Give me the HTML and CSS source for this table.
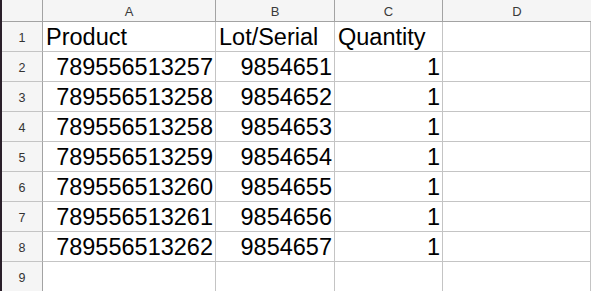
FILE: index.html
```html
<!DOCTYPE html>
<html>
<head>
<meta charset="utf-8">
<link rel="stylesheet" href="styles.css">
</head>
<body>
<div class="sheet">
  <div class="corner"></div>
  <div class="colhead">A</div>
  <div class="colhead">B</div>
  <div class="colhead">C</div>
  <div class="colhead last">D</div>

  <div class="rowhead">1</div>
  <div class="cell">Product</div>
  <div class="cell">Lot/Serial</div>
  <div class="cell">Quantity</div>
  <div class="cell"></div>

  <div class="rowhead">2</div>
  <div class="cell num">789556513257</div>
  <div class="cell num">9854651</div>
  <div class="cell num">1</div>
  <div class="cell"></div>

  <div class="rowhead">3</div>
  <div class="cell num">789556513258</div>
  <div class="cell num">9854652</div>
  <div class="cell num">1</div>
  <div class="cell"></div>

  <div class="rowhead">4</div>
  <div class="cell num">789556513258</div>
  <div class="cell num">9854653</div>
  <div class="cell num">1</div>
  <div class="cell"></div>

  <div class="rowhead">5</div>
  <div class="cell num">789556513259</div>
  <div class="cell num">9854654</div>
  <div class="cell num">1</div>
  <div class="cell"></div>

  <div class="rowhead">6</div>
  <div class="cell num">789556513260</div>
  <div class="cell num">9854655</div>
  <div class="cell num">1</div>
  <div class="cell"></div>

  <div class="rowhead">7</div>
  <div class="cell num">789556513261</div>
  <div class="cell num">9854656</div>
  <div class="cell num">1</div>
  <div class="cell"></div>

  <div class="rowhead">8</div>
  <div class="cell num">789556513262</div>
  <div class="cell num">9854657</div>
  <div class="cell num">1</div>
  <div class="cell"></div>

  <div class="rowhead">9</div>
  <div class="cell"></div>
  <div class="cell"></div>
  <div class="cell"></div>
  <div class="cell"></div>
</div>
</body>
</html>
```
FILE: styles.css
```css
html, body {
  margin: 0;
  padding: 0;
  background: #ffffff;
  overflow: hidden;
}
.sheet {
  display: grid;
  grid-template-columns: 41px 173px 119px 108px 1fr;
  grid-template-rows: 22px repeat(9, 30px);
  width: 591px;
  height: 291px;
  border-left: 2px solid #2a1f2a;
  box-sizing: border-box;
  font-family: "Liberation Sans", Arial, sans-serif;
}
.corner, .colhead, .rowhead {
  background: #f5f5f5;
  color: #3a3a3a;
  box-sizing: border-box;
  border-right: 1px solid #a3a3a3;
  border-bottom: 1px solid #a3a3a3;
  display: flex;
  align-items: center;
  justify-content: center;
  font-size: 13px;
}
.colhead.last {
  border-right: none;
}
.colhead, .corner {
  padding-top: 1px;
}
.rowhead {
  border-bottom: 1px solid #c4c4c4;
  border-right: 1px solid #a3a3a3;
  font-size: 12.5px;
  color: #333;
  padding-top: 2px;
}
.cell {
  box-sizing: border-box;
  border-right: 1px solid #c4c4c4;
  border-bottom: 1px solid #c4c4c4;
  font-size: 23.5px;
  color: #000;
  display: flex;
  align-items: flex-end;
  padding: 0 2px 0 3px;
  line-height: 27px;
  white-space: nowrap;
}
.cell.num {
  justify-content: flex-end;
}
```
